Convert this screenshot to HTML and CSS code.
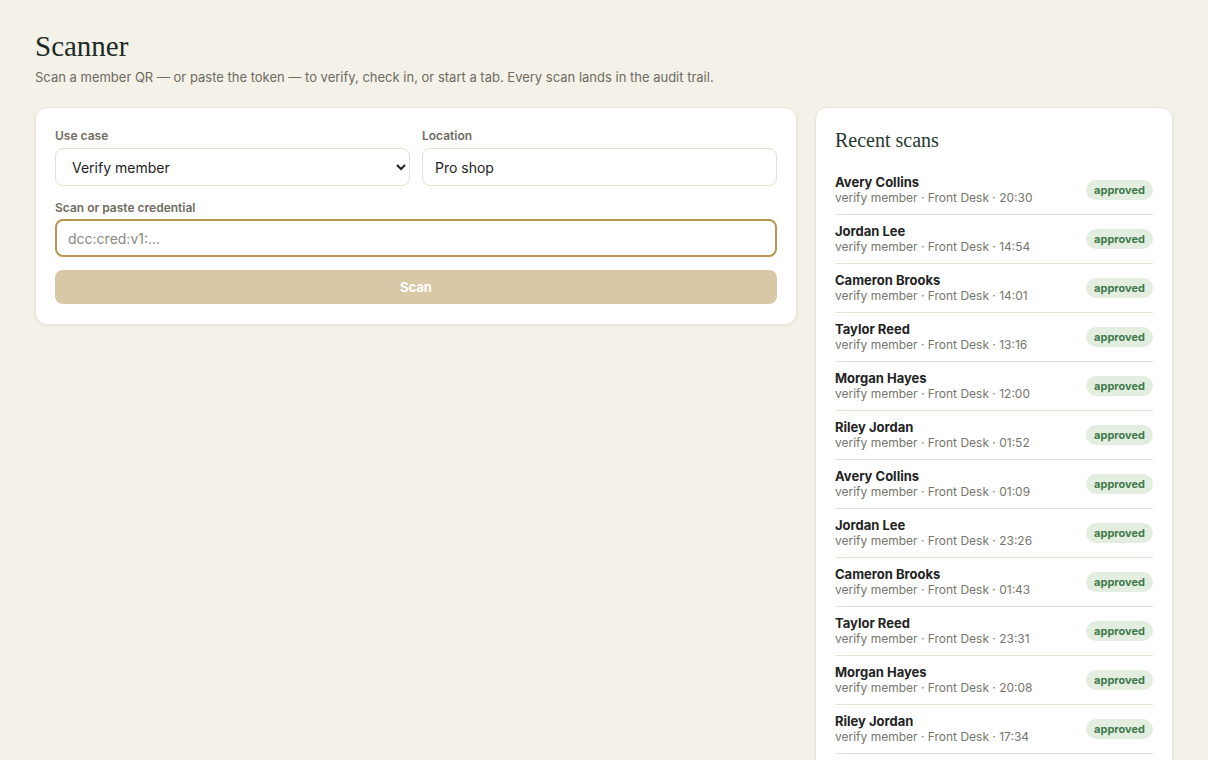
FILE: index.html
```html
<!DOCTYPE html>
<html lang="en">
<head>
  <meta charset="UTF-8">
  <meta name="viewport" content="width=device-width, initial-scale=1.0">
  <title>Scanner</title>
  <link rel="stylesheet" href="styles.css">
</head>
<body>
  <div class="page">
    <h1>Scanner</h1>
    <div class="sub">Scan a member QR — or paste the token — to verify, check in, or start a tab. Every scan lands in the audit trail.</div>

    <div class="layout">
      <div class="card scan-card">
        <div class="row-2">
          <div class="field">
            <label>Use case</label>
            <select>
              <option>Verify member</option>
              <option>Check in</option>
              <option>Start a tab</option>
            </select>
          </div>
          <div class="field">
            <label>Location</label>
            <input type="text" value="Pro shop">
          </div>
        </div>
        <div class="field">
          <label>Scan or paste credential</label>
          <input type="text" class="cred" placeholder="dcc:cred:v1:...">
        </div>
        <button class="scan-btn">Scan</button>
      </div>

      <div class="card recent">
        <h2>Recent scans</h2>
        <ul class="scans">
          <li><div><div class="name">Avery Collins</div><div class="meta">verify member · Front Desk · 20:30</div></div><span class="badge">approved</span></li>
          <li><div><div class="name">Jordan Lee</div><div class="meta">verify member · Front Desk · 14:54</div></div><span class="badge">approved</span></li>
          <li><div><div class="name">Cameron Brooks</div><div class="meta">verify member · Front Desk · 14:01</div></div><span class="badge">approved</span></li>
          <li><div><div class="name">Taylor Reed</div><div class="meta">verify member · Front Desk · 13:16</div></div><span class="badge">approved</span></li>
          <li><div><div class="name">Morgan Hayes</div><div class="meta">verify member · Front Desk · 12:00</div></div><span class="badge">approved</span></li>
          <li><div><div class="name">Riley Jordan</div><div class="meta">verify member · Front Desk · 01:52</div></div><span class="badge">approved</span></li>
          <li><div><div class="name">Avery Collins</div><div class="meta">verify member · Front Desk · 01:09</div></div><span class="badge">approved</span></li>
          <li><div><div class="name">Jordan Lee</div><div class="meta">verify member · Front Desk · 23:26</div></div><span class="badge">approved</span></li>
          <li><div><div class="name">Cameron Brooks</div><div class="meta">verify member · Front Desk · 01:43</div></div><span class="badge">approved</span></li>
          <li><div><div class="name">Taylor Reed</div><div class="meta">verify member · Front Desk · 23:31</div></div><span class="badge">approved</span></li>
          <li><div><div class="name">Morgan Hayes</div><div class="meta">verify member · Front Desk · 20:08</div></div><span class="badge">approved</span></li>
          <li><div><div class="name">Riley Jordan</div><div class="meta">verify member · Front Desk · 17:34</div></div><span class="badge">approved</span></li>
        </ul>
      </div>
    </div>
  </div>
</body>
</html>
```

FILE: styles.css
```css
* { margin: 0; padding: 0; box-sizing: border-box; }
body {
  font-family: Inter, 'Noto Sans', sans-serif;
  background: #f4f1e9;
  color: #23241f;
}
.page {
  padding: 28px 35px 40px;
}
h1 {
  font-family: 'Liberation Serif', serif;
  font-weight: 400;
  font-size: 29px;
  line-height: 36px;
  color: #1d2b27;
}
.sub {
  margin-top: 4px;
  font-size: 13px;
  line-height: 18px;
  color: #6d6b60;
}

.layout {
  display: grid;
  grid-template-columns: 1fr 358px;
  gap: 18px;
  align-items: start;
  margin-top: 21px;
}
.card {
  background: #fff;
  border: 1px solid #e9e4d7;
  border-radius: 12px;
  box-shadow: 0 1px 3px rgba(60,50,20,0.06);
  padding: 20px 19px;
}

.row-2 {
  display: grid;
  grid-template-columns: 1fr 1fr;
  gap: 12px;
}
.field {
  display: flex;
  flex-direction: column;
  margin-bottom: 14px;
}
.field label {
  font-size: 12px;
  line-height: 15px;
  font-weight: 600;
  color: #6f6c5f;
  margin-bottom: 5px;
}
.field select, .field input {
  font-family: inherit;
  font-size: 14px;
  color: #23241f;
  height: 38px;
  background: #fff;
  border: 1px solid #e6e0cf;
  border-radius: 8px;
  padding: 0 12px;
  outline: none;
}
.field input.cred {
  border: 2px solid #b8964e;
  padding: 0 11px;
  margin-top: -1px;
}
.field input::placeholder {
  color: #8a897f;
}
.scan-btn {
  display: block;
  width: 100%;
  height: 34px;
  margin-top: -1px;
  background: #d8c8a6;
  color: #fff;
  border: none;
  border-radius: 8px;
  font-family: inherit;
  font-size: 13px;
  font-weight: 700;
}

.recent h2 {
  font-family: 'Liberation Serif', serif;
  font-weight: 400;
  font-size: 20px;
  line-height: 24px;
  color: #24392e;
  margin-bottom: 14px;
}
.scans {
  list-style: none;
}
.scans li {
  display: flex;
  justify-content: space-between;
  align-items: center;
  padding: 8px 0;
  border-bottom: 1px solid #e6e1d3;
}
.name {
  font-size: 13px;
  line-height: 16px;
  font-weight: 700;
  color: #23241f;
}
.meta {
  font-size: 12px;
  line-height: 16px;
  color: #77766c;
}
.badge {
  font-size: 11px;
  line-height: 14px;
  font-weight: 700;
  color: #3f7a4a;
  background: #e3eee0;
  border-radius: 999px;
  padding: 3px 8px;
}
```
